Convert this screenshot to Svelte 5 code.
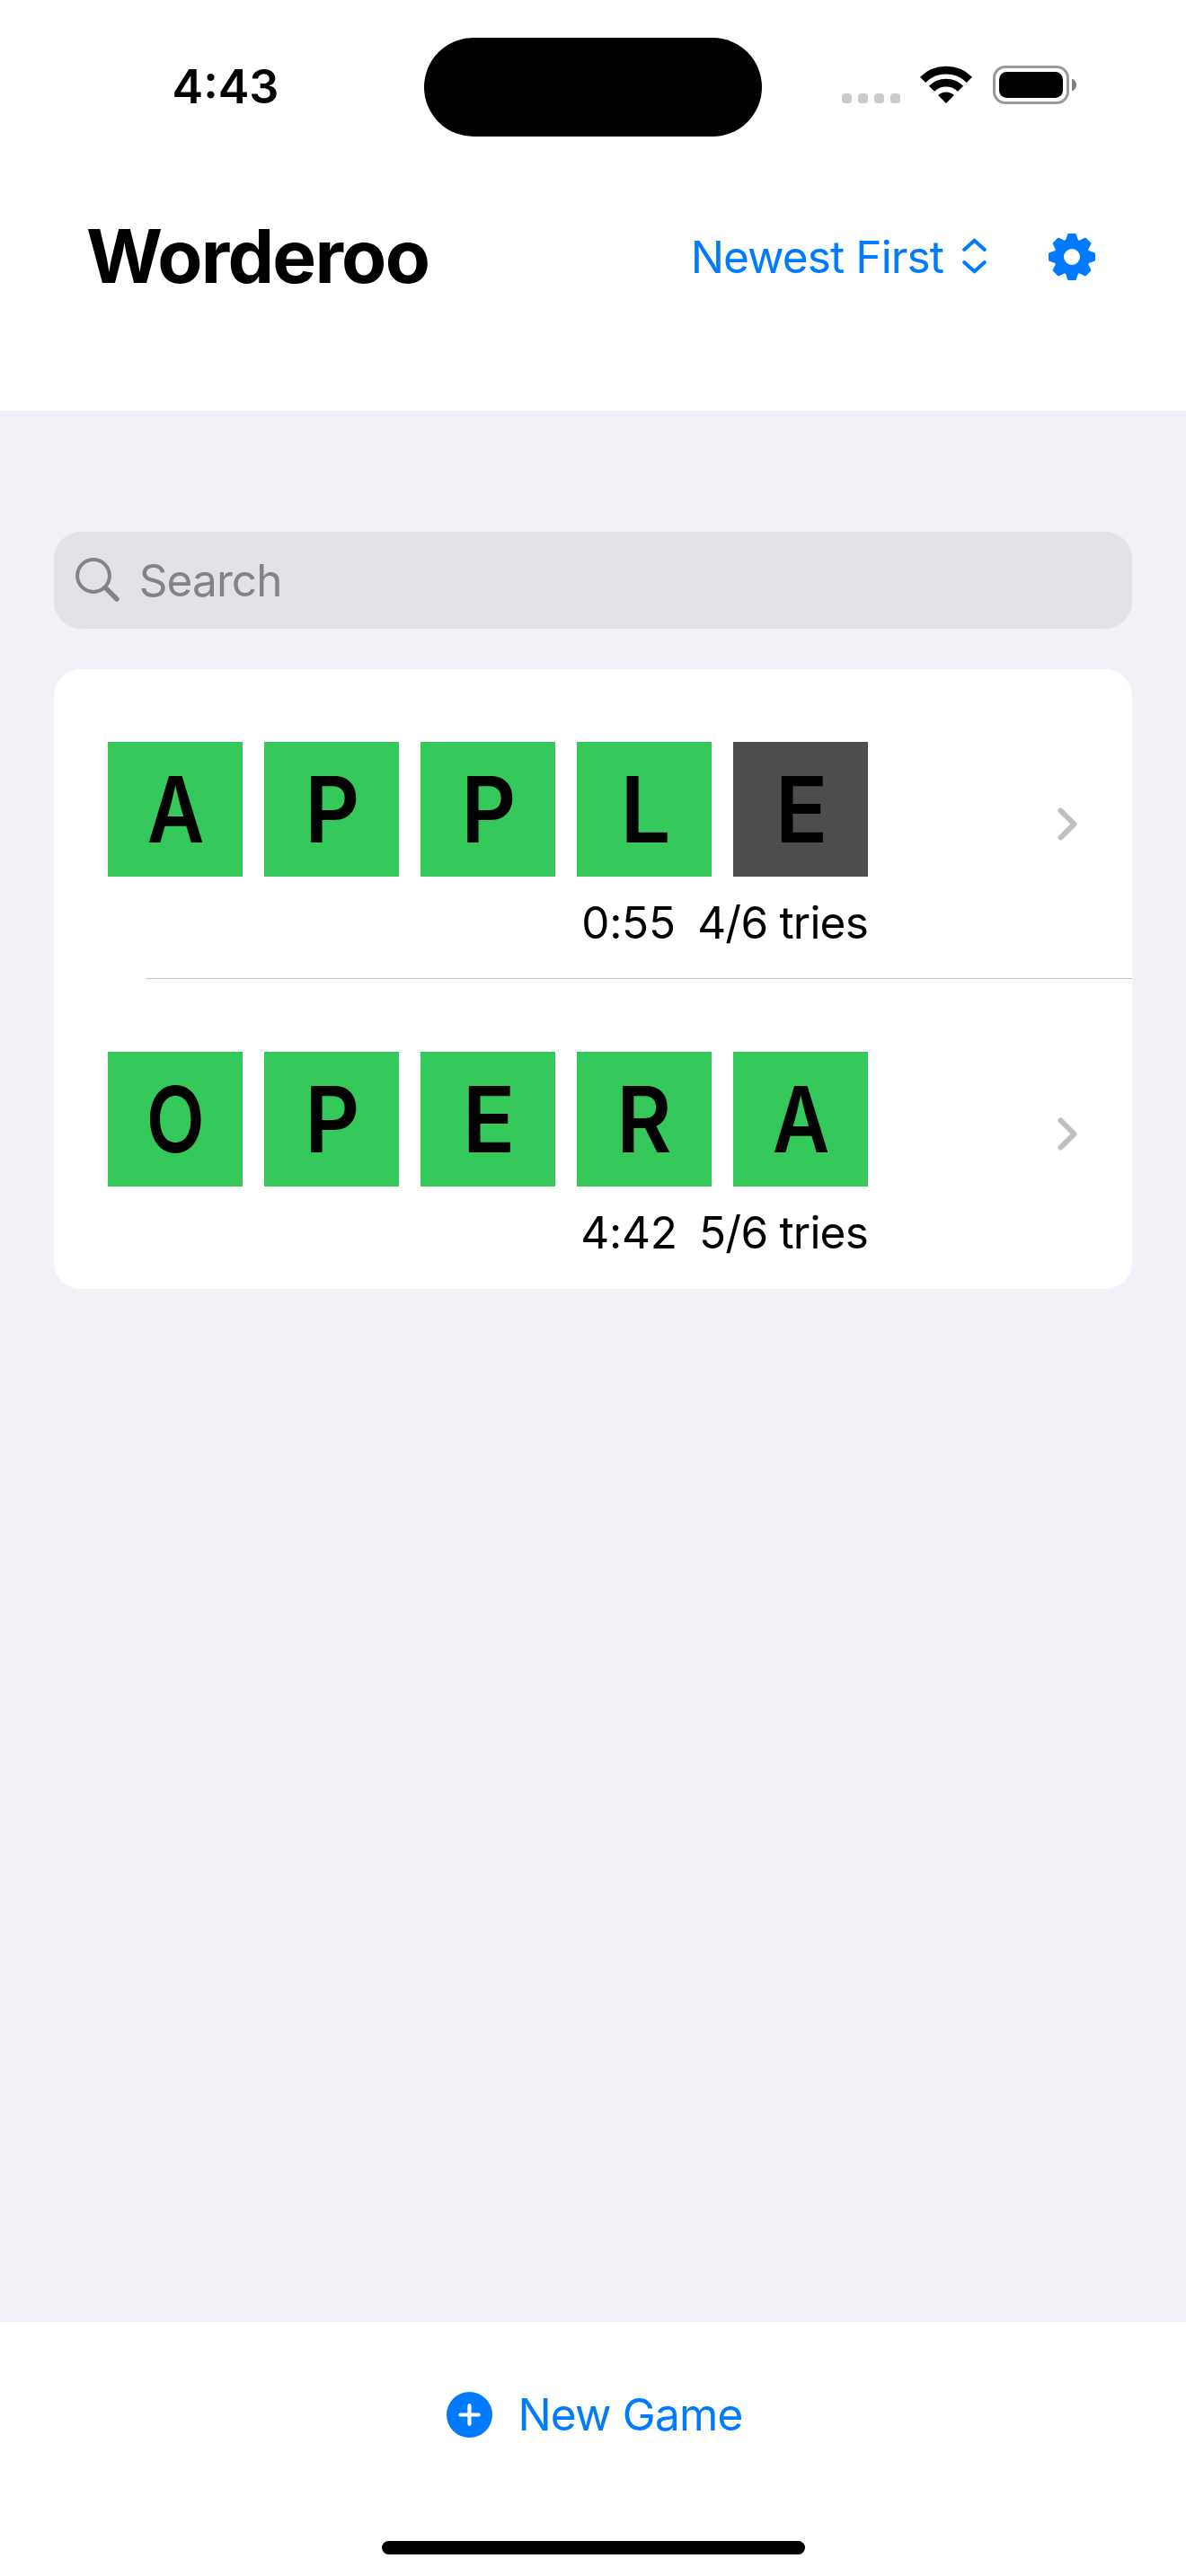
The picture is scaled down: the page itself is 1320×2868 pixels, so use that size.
<script>
  const glyphs = {
    A: [0.857, 0.5],
    P: [0.93, 0.9],
    L: [0.98, 1.7],
    E: [0.95, 1.1],
    O: [0.83, 0],
    R: [0.92, -0.4]
  };

  const games = [
    { word: 'APPLE', missed: [4], time: '0:55', tries: '4/6 tries' },
    { word: 'OPERA', missed: [], time: '4:42', tries: '5/6 tries' }
  ];

  const teeth = [0, 45, 90, 135, 180, 225, 270, 315];
  const turn = (x, y, deg) => {
    const a = (deg * Math.PI) / 180;
    const px = x * Math.cos(a) - y * Math.sin(a);
    const py = x * Math.sin(a) + y * Math.cos(a);
    return `${px.toFixed(2)} ${py.toFixed(2)}`;
  };
  const gear =
    teeth
      .map((d, i) => {
        const start = i === 0 ? `M${turn(-5.7, -18.3, d)}` : `Q${turn(-7.4, -16.6, d)} ${turn(-5.7, -18.3, d)}`;
        return `${start}L${turn(-3.6, -24.7, d)}L${turn(3.6, -24.7, d)}L${turn(5.7, -18.3, d)}`;
      })
      .join('') + `Q${turn(-7.4, -16.6, 0)} ${turn(-5.7, -18.3, 0)}Z`;
</script>

<div class="screen">
  <header>
    <div class="status">
      <span class="clock">4:43</span>
      <span class="island"></span>
      <div class="signals">
        <span class="dots"><i></i><i></i><i></i><i></i></span>
        <svg class="wifi" width="58" height="43" viewBox="-29 0 58 43">
          <g fill="none" stroke="#000">
            <path d="M-25.95 15.85A36.7 36.7 0 0 1 25.95 15.85" stroke-width="8.8" />
            <path d="M-16.05 25.75A22.7 22.7 0 0 1 16.05 25.75" stroke-width="8.8" />
          </g>
          <path d="M0 42L-8.9 33A12.8 12.8 0 0 1 8.9 33Z" />
        </svg>
        <svg class="battery" width="94" height="43" viewBox="0 0 94 43">
          <rect x="1.5" y="1.5" width="82" height="40" rx="12.5" fill="none" stroke="#999" stroke-width="3" />
          <rect x="7" y="7" width="71" height="29" rx="8.5" />
          <path d="M88 14.5Q93 16.5 93 21.5Q93 26.5 88 28.5Z" fill="#808080" />
        </svg>
      </div>
    </div>
    <div class="bar">
      <h1>Worderoo</h1>
      <div class="sort">
        <span>Newest First</span>
        <svg width="27" height="40" viewBox="0 0 27 40">
          <path d="M2.2 13L13.5 2.7L24.8 13M2.2 27L13.5 37.3L24.8 27" fill="none" stroke="#007aff" stroke-width="4" stroke-linecap="round" stroke-linejoin="round" />
        </svg>
      </div>
      <svg class="gear" width="52" height="52" viewBox="-26 -26 52 52">
        <path d={gear} fill="#007aff" stroke="#007aff" stroke-width="2.6" stroke-linejoin="round" />
        <circle r="9" fill="#fff" />
      </svg>
    </div>
  </header>

  <main>
    <div class="search">
      <svg width="50" height="50" viewBox="0 0 50 50">
        <g fill="none" stroke="#838287">
          <circle cx="20" cy="20" r="17.9" stroke-width="4" />
          <path d="M33 33L46 46" stroke-width="5.4" stroke-linecap="round" />
        </g>
      </svg>
      <span>Search</span>
    </div>

    <div class="card">
      {#each games as game}
        <div class="row">
          <div class="game">
            <div class="tiles">
              {#each game.word.split('') as letter, i}
                <div class="tile" class:missed={game.missed.includes(i)}>
                  <span style:transform="translateX({glyphs[letter][1]}px) scaleX({glyphs[letter][0]})">{letter}</span>
                </div>
              {/each}
            </div>
            <div class="meta"><span class="time">{game.time}</span><span class="tries">{game.tries}</span></div>
          </div>
          <svg width="22" height="37" viewBox="0 0 22 37">
            <path d="M3.5 3.5L18.5 18.5L3.5 33.5" fill="none" stroke="#bfbfbf" stroke-width="6" stroke-linecap="round" stroke-linejoin="round" />
          </svg>
        </div>
      {/each}
    </div>
  </main>

  <footer>
    <div class="new">
      <svg width="51" height="51" viewBox="0 0 51 51">
        <circle cx="25.5" cy="25.5" r="25.5" fill="#007aff" />
        <path d="M15.2 25.5H35.8M25.5 15.2V35.8" stroke="#fff" stroke-width="4.2" stroke-linecap="round" />
      </svg>
      <span>New Game</span>
    </div>
    <div class="home"></div>
  </footer>
</div>

<style>
  :global(body) {
    margin: 0;
  }
  .screen {
    width: 1320px;
    height: 2868px;
    display: flex;
    flex-direction: column;
    background: #f2f1f7;
    color: #000;
    font: 400 49.5px/60px Inter, 'Liberation Sans', sans-serif;
    overflow: hidden;
  }
  svg {
    display: block;
    flex: none;
  }
  header {
    height: 457px;
    background: #fff;
    flex: none;
  }
  .status {
    height: 152px;
    display: grid;
    grid-template-columns: 472px 376px 1fr;
    box-sizing: border-box;
    padding-top: 42px;
  }
  .clock {
    padding-left: 191.5px;
    font-size: 52px;
    font-weight: 600;
    line-height: 109px;
  }
  .island {
    height: 110px;
    border-radius: 55px;
    background: #000;
  }
  .signals {
    display: flex;
    align-items: flex-start;
    padding: 31px 0 0 89px;
  }
  .dots {
    display: flex;
    gap: 7px;
    padding-top: 31px;
    margin-right: 22px;
  }
  .dots i {
    width: 11px;
    height: 11px;
    border-radius: 3.5px;
    background: #cbcbcb;
  }
  .battery {
    margin-left: 23px;
  }
  .bar {
    display: flex;
    align-items: center;
    height: 100px;
    margin-top: 84px;
    padding: 0 101px 0 96px;
  }
  h1 {
    margin: 0;
    font-size: 82px;
    line-height: 98px;
    font-weight: 700;
    letter-spacing: -1.75px;
  }
  .sort {
    margin-left: auto;
    display: flex;
    align-items: center;
    gap: 21px;
    color: #007aff;
    letter-spacing: -0.9px;
  }
  .sort svg {
    margin-top: -2px;
  }
  .gear {
    margin-left: 69px;
  }
  main {
    flex: 1;
    padding: 135px 60px 0;
  }
  .search {
    height: 108px;
    border-radius: 30px;
    background: #e3e2e8;
    color: #838287;
    display: flex;
    align-items: center;
    padding-left: 24px;
    box-sizing: border-box;
    letter-spacing: -0.9px;
  }
  .search span {
    margin-left: 20.7px;
  }
  .search svg {
    margin-top: -1px;
  }
  .card {
    margin-top: 45px;
    background: #fff;
    border-radius: 30px;
    overflow: hidden;
  }
  .row {
    height: 345px;
    box-sizing: border-box;
    padding: 81px 61px 0 60px;
    display: flex;
    justify-content: space-between;
  }
  .row > svg {
    margin-top: 72.5px;
  }
  .row:first-child {
    background: linear-gradient(#c6c6c8, #c6c6c8) 102px 344px / 1098px 1px no-repeat;
  }
  .tiles {
    display: flex;
    gap: 24px;
  }
  .tile {
    width: 150px;
    height: 150px;
    background: #35c85a;
    font-size: 102px;
    line-height: 150px;
    font-weight: 560;
    text-align: center;
  }
  .tile.missed {
    background: #4d4d4d;
  }
  .tile span {
    display: inline-block;
  }
  .meta {
    display: flex;
    justify-content: flex-end;
    gap: 24.5px;
    margin-top: 21px;
  }
  .time {
    letter-spacing: -0.3px;
  }
  .tries {
    letter-spacing: -0.8px;
  }
  footer {
    height: 283px;
    flex: none;
    background: #fff;
    display: flex;
    flex-direction: column;
    align-items: center;
  }
  .new {
    display: flex;
    align-items: center;
    gap: 28px;
    height: 60px;
    margin-top: 73px;
    padding-left: 4px;
    color: #007aff;
    letter-spacing: -0.8px;
  }
  .home {
    width: 471px;
    height: 15px;
    border-radius: 8px;
    background: #000;
    margin-top: 111px;
  }
</style>
